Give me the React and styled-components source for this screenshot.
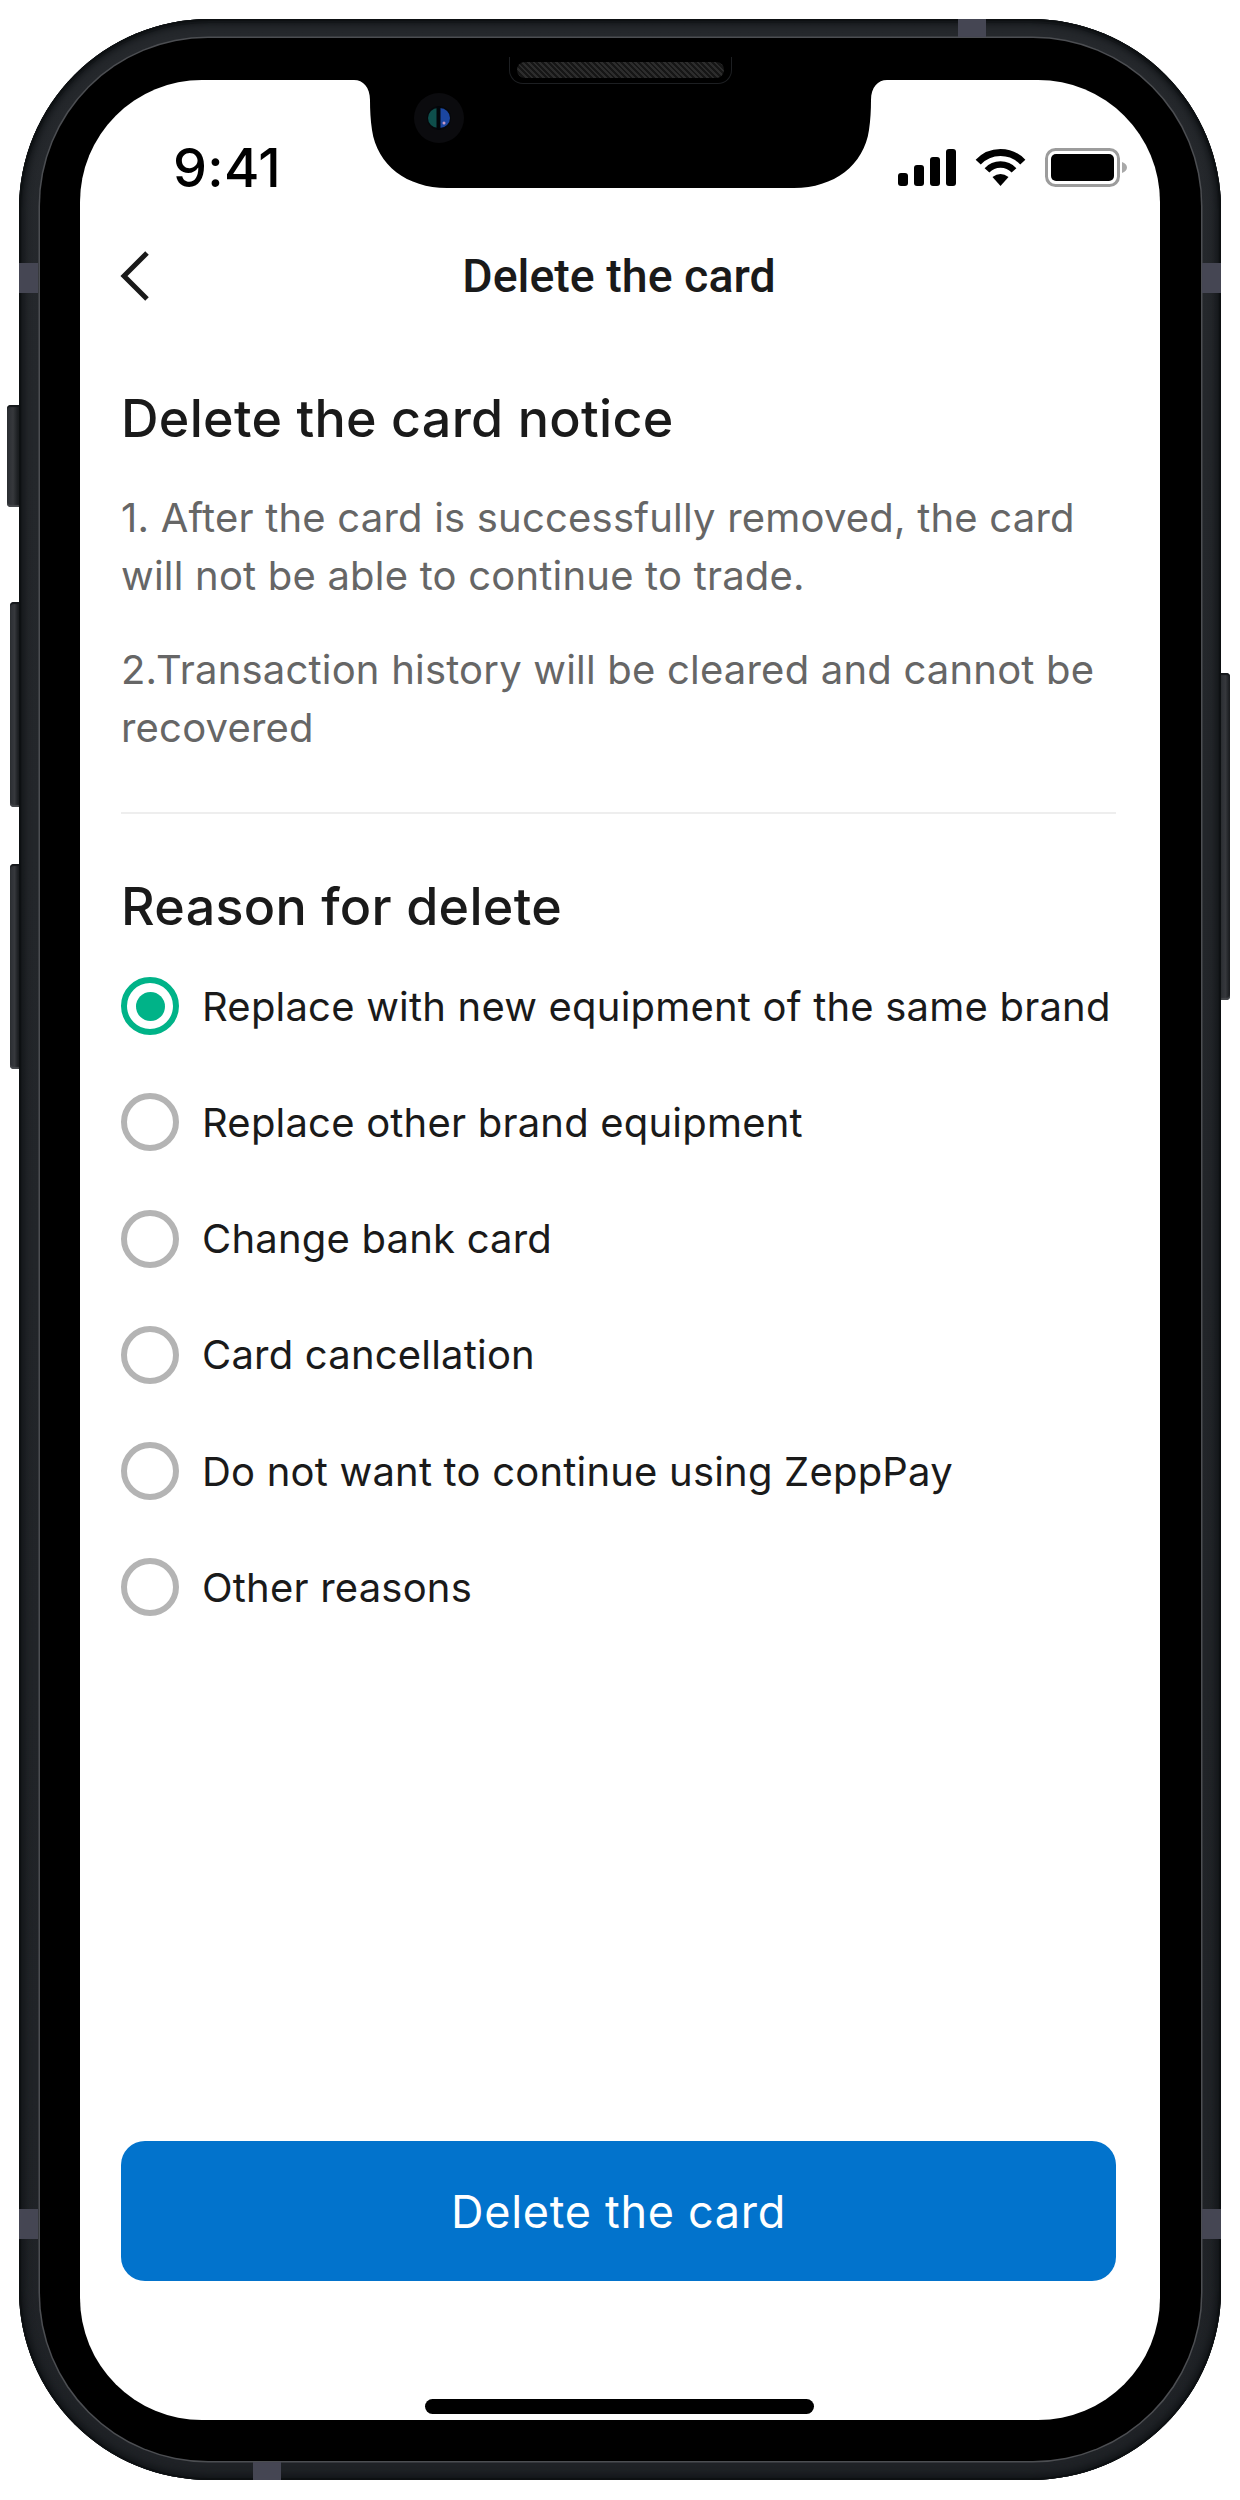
import React from 'react';
import styled, { createGlobalStyle } from 'styled-components';

const GlobalStyle = createGlobalStyle`
  html, body {
    margin: 0;
    padding: 0;
    background: #ffffff;
  }
  * {
    box-sizing: border-box;
  }
`;

const Page = styled.div`
  width: 1240px;
  height: 2500px;
  padding: 19px;
  background: #ffffff;
  font-family: Inter, "Liberation Sans", sans-serif;
`;

const Frame = styled.div`
  position: relative;
  width: 1202px;
  height: 2461px;
  padding: 19px 20px 19px 21px;
  border-radius: 190px;
  background: linear-gradient(180deg, #25282c, #1f2226);
  box-shadow:
    inset 0 0 0 2px #0d1012,
    inset 0 1px 0 3px #131619,
    inset 0 0 7px 5px #111417;
`;

const SideButton = styled.div`
  position: absolute;
  top: ${({ $top }) => $top}px;
  height: ${({ $height }) => $height}px;
  width: ${({ $width }) => $width}px;
  ${({ $right, $width }) =>
    $right
      ? `right: -${$width}px; border-radius: 0 4px 4px 0;`
      : `left: -${$width}px; border-radius: 4px 0 0 4px;`}
  background: linear-gradient(90deg, #2b2e33, #36383c 50%, #15181b);
  box-shadow: inset 0 2px 1px #15181b, inset 0 -2px 1px #45474b;
`;

const Band = styled.div`
  position: absolute;
  background: #454653;
  ${({ $edge, $at }) =>
    $edge === 'left' || $edge === 'right'
      ? `${$edge}: 0; top: ${$at}px; width: 19px; height: 30px;`
      : `${$edge}: 0; left: ${$at}px; width: 28px; height: 18px;`}
`;

const Bezel = styled.div`
  width: 1161px;
  height: 2423px;
  padding: 42px 41px 41px 40px;
  border-radius: 168px;
  background: #000000;
  box-shadow: 0 0 0 1.5px #4c4e52;
`;

const Screen = styled.div`
  position: relative;
  width: 1080px;
  height: 2340px;
  border-radius: 122px;
  background: #ffffff;
  display: flex;
  flex-direction: column;
  overflow: hidden;
`;

const Speaker = styled.div`
  position: absolute;
  top: 38px;
  left: 50%;
  margin-left: -111px;
  width: 223px;
  height: 27px;
  border-radius: 0 0 14px 14px;
  border: 1px solid #1d1f22;
  border-top: none;
  display: flex;
  align-items: center;
  justify-content: center;
`;

const SpeakerMesh = styled.div`
  width: 207px;
  height: 16px;
  border-radius: 8px;
  background: repeating-linear-gradient(45deg, #161616 0 2px, #2c2c2c 2px 4px);
`;

const NotchShape = styled.svg`
  position: absolute;
  top: 0;
  left: 274px;
  display: block;
`;

const StatusBar = styled.div`
  height: 150px;
  padding: 68px 33px 0 93px;
  display: flex;
  justify-content: space-between;
  align-items: flex-start;
`;

const Time = styled.div`
  font-family: Inter, sans-serif;
  font-size: 54px;
  font-weight: 500;
  line-height: 40px;
  letter-spacing: 0.3px;
  color: #000000;
`;

const StatusIcons = styled.div`
  display: flex;
  align-items: center;
  gap: 19px;
  height: 39px;
`;

const NavBar = styled.div`
  position: relative;
  height: 92px;
  display: flex;
  align-items: center;
  justify-content: center;
`;

const BackIcon = styled.svg`
  position: absolute;
  left: 40px;
  top: 21px;
`;

const NavTitle = styled.div`
  font-family: Roboto, sans-serif;
  font-size: 46.5px;
  font-weight: 500;
  color: #1a1a1a;
  margin-left: -2px;
`;

const Content = styled.div`
  flex: 1;
  padding: 67px 44px 0 41px;
  display: flex;
  flex-direction: column;
`;

const SectionTitle = styled.h2`
  margin: 0 0 40px;
  font-size: 52px;
  line-height: 60px;
  font-weight: 500;
  letter-spacing: 0.3px;
  color: #1a1a1a;
`;

const Paragraph = styled.p`
  margin: 0 0 36px;
  font-size: 40px;
  line-height: 58px;
  font-weight: 400;
  letter-spacing: 0.2px;
  color: #666666;
`;

const Divider = styled.div`
  height: 2px;
  margin: 19px 0 63px;
  background: #eeeeee;
`;

const Options = styled.div`
  display: flex;
  flex-direction: column;
  gap: 58.3px;
`;

const Option = styled.div`
  height: 58px;
  display: flex;
  align-items: center;
  gap: 23px;
  font-size: 40px;
  letter-spacing: 0.2px;
  color: #1a1a1a;
  white-space: nowrap;
`;

const Radio = styled.span`
  flex: none;
  width: 58px;
  height: 58px;
  border-radius: 50%;
  border: 6.5px solid ${({ $checked }) => ($checked ? '#00b388' : '#b4b4b4')};
  display: flex;
  align-items: center;
  justify-content: center;

  &::after {
    content: '';
    display: ${({ $checked }) => ($checked ? 'block' : 'none')};
    width: 29px;
    height: 29px;
    border-radius: 50%;
    background: #00b388;
  }
`;

const Footer = styled.div`
  padding: 0 44px 6px 41px;
  display: flex;
  flex-direction: column;
  align-items: center;
`;

const DeleteButton = styled.button`
  width: 100%;
  height: 140px;
  border: none;
  border-radius: 24px;
  background: #0273cc;
  color: #ffffff;
  font-family: Inter, sans-serif;
  font-size: 45px;
  font-weight: 400;
  letter-spacing: 0.7px;
`;

const HomeIndicator = styled.div`
  width: 389px;
  height: 15px;
  margin-top: 118px;
  margin-left: 2px;
  border-radius: 8px;
  background: #000000;
`;

const reasons = [
  'Replace with new equipment of the same brand',
  'Replace other brand equipment',
  'Change bank card',
  'Card cancellation',
  'Do not want to continue using ZeppPay',
  'Other reasons',
];

const Notch = () => (
  <NotchShape width="533" height="108" viewBox="0 0 533 108">
    <path
      d="M0 0H533C524 0 517 7 517 20C517 30 516.5 40 515 50C510 85 480 108 440 108H93C53 108 23 85 18 50C16.5 40 16 30 16 20C16 7 9 0 0 0Z"
      fill="#000"
    />
    <circle cx="85" cy="38" r="25" fill="#0b0b0e" />
    <circle cx="85" cy="38" r="12" fill="#06080c" />
    <path d="M86 28a10 10 0 0 1 0 20z" fill="#1b46a0" />
    <path d="M84 28a10 10 0 0 0 0 20z" fill="#0e4f4c" />
    <rect x="82.5" y="26" width="4" height="24" rx="2" fill="#02060a" />
    <circle cx="90" cy="43" r="1.5" fill="#c89ac8" />
  </NotchShape>
);

const SignalIcon = () => (
  <svg width="58" height="37" viewBox="0 0 58 37">
    <rect x="0" y="24" width="10" height="13" rx="3" fill="#000" />
    <rect x="16" y="16" width="10" height="21" rx="3" fill="#000" />
    <rect x="32" y="8" width="10" height="29" rx="3" fill="#000" />
    <rect x="48" y="0" width="10" height="37" rx="3" fill="#000" />
  </svg>
);

const WifiIcon = () => (
  <svg width="51" height="37" viewBox="0 0 51 37">
    <path d="M3.2 13.2A30.5 30.5 0 0 1 47.8 13.2" fill="none" stroke="#000" strokeWidth="7" />
    <path d="M12 21.4A18.5 18.5 0 0 1 39 21.4" fill="none" stroke="#000" strokeWidth="6.5" />
    <path d="M25.5 37L17.5 28Q25.5 22 33.5 28Z" fill="#000" />
  </svg>
);

const BatteryIcon = () => (
  <svg width="82" height="39" viewBox="0 0 82 39">
    <rect x="1.5" y="1.5" width="72" height="36" rx="9" fill="none" stroke="#9c9c9c" strokeWidth="3" />
    <rect x="6" y="6" width="63" height="27" rx="5" fill="#000" />
    <path d="M77 14c3 1 5 3 5 5.5S80 24 77 25z" fill="#a8a8a8" />
  </svg>
);

const App = () => (
  <Page>
    <GlobalStyle />
    <Frame>
      <SideButton $top={386} $height={102} $width={12} />
      <SideButton $top={583} $height={205} $width={9} />
      <SideButton $top={845} $height={205} $width={9} />
      <SideButton $right $top={654} $height={327} $width={9} />
      <Band $edge="left" $at={244} />
      <Band $edge="left" $at={2190} />
      <Band $edge="right" $at={244} />
      <Band $edge="right" $at={2190} />
      <Band $edge="top" $at={939} />
      <Band $edge="bottom" $at={234} />
      <Bezel>
        <Screen>
          <Notch />
          <StatusBar>
            <Time>9:41</Time>
            <StatusIcons>
              <SignalIcon />
              <WifiIcon />
              <BatteryIcon />
            </StatusIcons>
          </StatusBar>
          <NavBar>
            <BackIcon width="32" height="50" viewBox="0 0 32 50">
              <path d="M27 2L4 25L27 48" fill="none" stroke="#1a1a1a" strokeWidth="5" />
            </BackIcon>
            <NavTitle>Delete the card</NavTitle>
          </NavBar>
          <Content>
            <SectionTitle>Delete the card notice</SectionTitle>
            <Paragraph>
              1. After the card is successfully removed, the card will not be able to continue to trade.
            </Paragraph>
            <Paragraph>
              2.Transaction history will be cleared and cannot be recovered
            </Paragraph>
            <Divider />
            <SectionTitle>Reason for delete</SectionTitle>
            <Options>
              {reasons.map((reason, index) => (
                <Option key={reason}>
                  <Radio $checked={index === 0} />
                  {reason}
                </Option>
              ))}
            </Options>
          </Content>
          <Footer>
            <DeleteButton>Delete the card</DeleteButton>
            <HomeIndicator />
          </Footer>
        </Screen>
        <Speaker>
          <SpeakerMesh />
        </Speaker>
      </Bezel>
    </Frame>
  </Page>
);

export default App;
